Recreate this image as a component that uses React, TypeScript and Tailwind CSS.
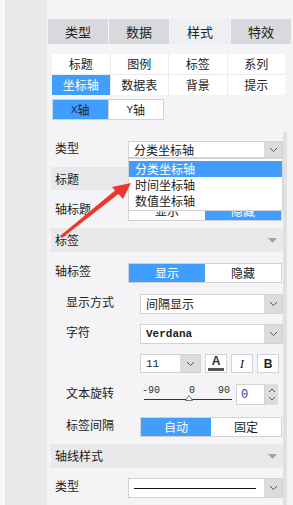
import type { ReactNode } from "react";

const cjk = { fontFamily: '"Noto Sans CJK SC", "Noto Sans", sans-serif' };
const mono = { fontFamily: '"Liberation Mono", "DejaVu Sans Mono", monospace' };

function Chevron() {
  return (
    <svg width="9" height="6" viewBox="0 0 9 6" className="text-[#555]">
      <polyline points="1,1 4.5,4.5 8,1" fill="none" stroke="currentColor" strokeWidth="1" />
    </svg>
  );
}

function Caret() {
  return (
    <svg width="9" height="5" viewBox="0 0 9 5">
      <polygon points="0,0 9,0 4.5,5" fill="#a3a3a3" />
    </svg>
  );
}

function Select({ children, className = "", arrowW = "w-[18px]" }: { children: ReactNode; className?: string; arrowW?: string }) {
  return (
    <div className={`flex border border-[#d3d3d6] bg-white ${className}`}>
      <div className="flex flex-1 items-center overflow-hidden pl-[5px] text-[12px] leading-[14px] text-[#222]">{children}</div>
      <div className={`flex ${arrowW} items-center justify-center bg-[#dcdcdf]`}>
        <Chevron />
      </div>
    </div>
  );
}

function Toggle({ left, right, active, className = "" }: { left: string; right: string; active: 0 | 1; className?: string }) {
  const on = "bg-[#409eff] text-white";
  const off = "bg-white text-[#222]";
  return (
    <div className={`flex border border-[#d3d3d6] text-[12px] leading-[14px] ${className}`}>
      <div className={`flex flex-1 items-center justify-center ${active === 0 ? on : off}`}>{left}</div>
      <div className={`flex flex-1 items-center justify-center ${active === 1 ? on : off}`}>{right}</div>
    </div>
  );
}

function Section({ title, className = "" }: { title: string; className?: string }) {
  return (
    <div className={`flex items-center justify-between bg-[#e9e9eb] pl-[4px] pr-[6px] text-[12px] leading-[14px] text-[#222] ${className}`}>
      <span>{title}</span>
      <Caret />
    </div>
  );
}

function Label({ children, sub = false }: { children: ReactNode; sub?: boolean }) {
  return (
    <div className={`shrink-0 -translate-y-[2px] leading-[14px] ${sub ? "w-[89px] pl-[15px]" : "w-[77px] pl-[4px]"}`}>
      {children}
    </div>
  );
}

const tabs = ["类型", "数据", "样式", "特效"];
const subTabs = ["标题", "图例", "标签", "系列", "坐标轴", "数据表", "背景", "提示"];

export default function App() {
  return (
    <div className="relative flex h-[505px] w-[293px] overflow-hidden bg-[#f4f4f6]" style={cjk}>
      <div className="w-[6px] border-r border-[#f1e7c9] bg-[#faf9f4]" />
      <div className="w-[41px] bg-[#e8e8e8]" />

      <div className="flex-1 pl-px pt-[19px]">
        <div className="mr-[2px] grid h-[25px] grid-cols-4 gap-px text-[13px] leading-[16px] text-[#222]">
          {tabs.map((t, i) => (
            <div key={t} className={`flex items-center justify-center ${i === 2 ? "bg-[#efeff1]" : "bg-[#d8d9dc]"}`}>
              {t}
            </div>
          ))}
        </div>

        <div className="ml-[4px] mr-[8px] mt-[10px] grid grid-cols-4 gap-px bg-[#ebebed] text-[12px] leading-[14px]">
          {subTabs.map((t) => (
            <div key={t} className={`flex h-[20px] items-center justify-center ${t === "坐标轴" ? "bg-[#409eff] text-white" : "bg-white text-[#222]"}`}>
              {t}
            </div>
          ))}
        </div>

        <div className="ml-[4px] mt-[4px] flex h-[21px] w-[112px] text-[12px] leading-[14px]">
          <div className="flex flex-1 items-center justify-center border border-[#d3d3d6] bg-[#409eff] text-[#222]">
            <span style={mono} className="text-[11px] text-[#1a237e]">X</span>轴
          </div>
          <div className="flex flex-1 items-center justify-center border border-l-0 border-[#d3d3d6] bg-white text-[#222]">
            <span style={mono} className="text-[11px]">Y</span>轴
          </div>
        </div>

        <div className="mt-[10px] flex">
          <div className="ml-[3px] w-[232px] text-[12px] text-[#222]">
            <div className="relative mt-[11px] flex h-[17px] items-center">
              <Label>类型</Label>
              <Select className="h-[17px] flex-1">分类坐标轴</Select>
              <div className="absolute left-[77px] right-0 top-full z-10 border border-[#d3d3d6] bg-white pb-px pt-[2px] text-[12px] leading-[16px]">
                <div className="bg-[#409eff] pl-[6px] text-white">分类坐标轴</div>
                <div className="pl-[6px]">时间坐标轴</div>
                <div className="pl-[6px]">数值坐标轴</div>
              </div>
            </div>

            <Section title="标题" className="mt-[9px] h-[23px]" />

            <div className="mt-[11px] flex h-[20px] items-center">
              <Label>轴标题</Label>
              <Toggle left="显示" right="隐藏" active={1} className="mr-px h-[20px] flex-1" />
            </div>

            <Section title="标签" className="mt-[7px] h-[24px]" />

            <div className="mt-[11px] flex h-[20px] items-center">
              <Label>轴标签</Label>
              <Toggle left="显示" right="隐藏" active={0} className="mr-px h-[20px] flex-1" />
            </div>

            <div className="mt-[11px] flex h-[20px] items-center">
              <Label sub>显示方式</Label>
              <Select className="h-[20px] flex-1">间隔显示</Select>
            </div>

            <div className="mt-[10px] flex h-[20px] items-center">
              <Label sub>字符</Label>
              <Select className="h-[20px] flex-1">
                <span style={{ fontFamily: '"Liberation Mono", monospace' }} className="text-[11px] font-bold text-[#222]">Verdana</span>
              </Select>
            </div>

            <div className="mt-[10px] flex h-[19px]">
              <div className="w-[89px] shrink-0" />
              <Select className="w-[61px]" arrowW="w-[20px]">
                <span style={mono} className="text-[11px]">11</span>
              </Select>
              <div className="ml-[4px] flex w-[22px] flex-col items-center justify-center border border-[#d3d3d6] bg-white">
                <span className="font-['Liberation_Sans'] text-[12px] font-bold leading-[11px] text-[#333]">A</span>
                <div className="mt-px h-[3px] w-[16px] bg-[#555]" />
              </div>
              <div className="ml-[4px] flex w-[22px] items-center justify-center border border-[#d3d3d6] bg-white">
                <span className="font-['Liberation_Serif'] text-[13px] italic leading-[14px] text-[#222]">I</span>
              </div>
              <div className="ml-[4px] flex w-[22px] items-center justify-center border border-[#d3d3d6] bg-white">
                <span className="font-['Liberation_Sans'] text-[12px] font-bold leading-[14px] text-[#222]">B</span>
              </div>
            </div>

            <div className="mt-[11px] flex h-[21px] items-center">
              <Label sub>文本旋转</Label>
              <div className="relative h-[21px] w-[96px] shrink-0">
                <div style={mono} className="flex w-[90px] justify-between pl-[2px] pt-px text-[10px] leading-[12px] text-[#333]">
                  <span>-90</span>
                  <span className="pl-[6px]">0</span>
                  <span>90</span>
                </div>
                <div className="ml-[4px] mt-[2px] h-px w-[88px] bg-[#333]" />
                <svg width="8" height="6" viewBox="0 0 8 6" className="absolute left-[45px] top-[11px]">
                  <polygon points="4,0.5 7.5,5.5 0.5,5.5" fill="white" stroke="#777" strokeWidth="1" />
                </svg>
              </div>
              <div className="flex h-[21px] flex-1">
                <div className="flex w-[29px] items-center border border-[#d3d3d6] bg-white pl-[4px]">
                  <span style={mono} className="text-[12px] leading-[14px] text-[#1a3a9e]">0</span>
                </div>
                <div className="flex w-[13px] flex-col items-center justify-center gap-[3px] bg-[#dcdcdf]">
                  <svg width="8" height="5" viewBox="0 0 8 5"><polyline points="1,4 4,1 7,4" fill="none" stroke="#555" /></svg>
                  <svg width="8" height="5" viewBox="0 0 8 5"><polyline points="1,1 4,4 7,1" fill="none" stroke="#555" /></svg>
                </div>
              </div>
            </div>

            <div className="mt-[12px] flex h-[20px] items-center">
              <Label sub>标签间隔</Label>
              <Toggle left="自动" right="固定" active={0} className="mr-px h-[20px] flex-1" />
            </div>

            <Section title="轴线样式" className="mt-[7px] h-[24px]" />

            <div className="mt-[10px] flex h-[20px] items-center">
              <Label>类型</Label>
              <Select className="h-[20px] flex-1">
                <div className="mr-[8px] h-px flex-1 bg-[#111]" />
              </Select>
            </div>
          </div>
          <div className="mt-[2px] h-[380px] w-[4px] bg-[#e0e0e2]" />
        </div>
      </div>

      <svg className="pointer-events-none absolute left-0 top-0 z-20" width="293" height="505" viewBox="0 0 293 505">
        <polygon points="60,236 62,238 121,192 118,188" fill="#f0362c" />
        <polygon points="131,183 112,187 123,199" fill="#f0362c" />
      </svg>
    </div>
  );
}
